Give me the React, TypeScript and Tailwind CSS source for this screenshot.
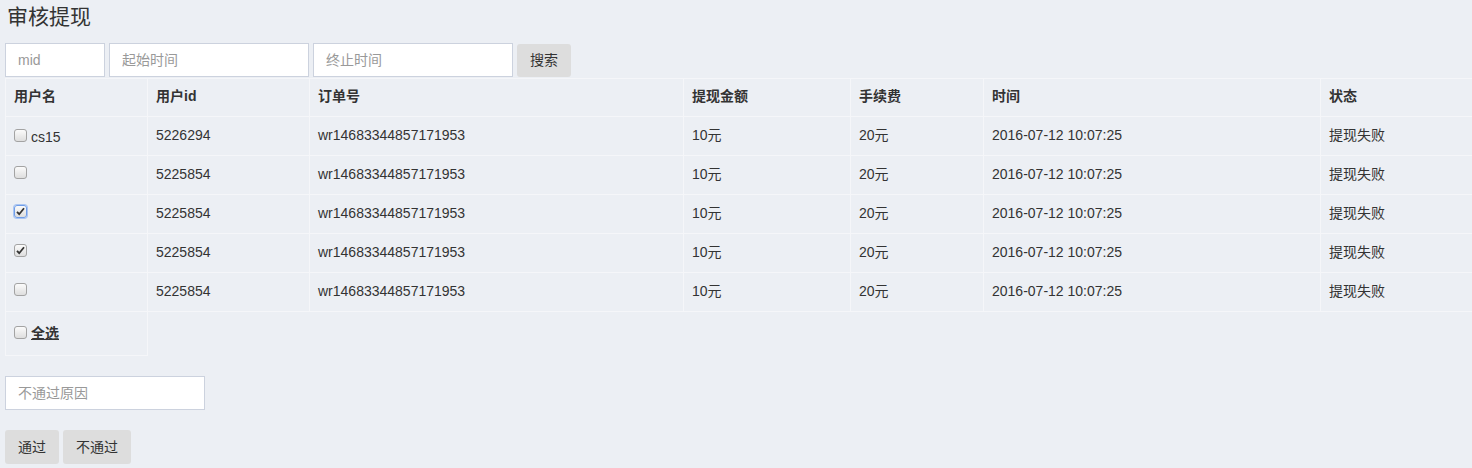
import React from "react";

const font = { fontFamily: '"Liberation Sans", Arial, "Noto Sans CJK SC", sans-serif' };

function Box({ checked, focus }: { checked?: boolean; focus?: boolean }) {
  return (
    <span
      className={
        "relative inline-block w-[13px] h-[13px] rounded-[3px] border align-middle bg-gradient-to-b from-[#fbfbfb] to-[#dedede] " +
        (focus ? "border-[#6f9de8] shadow-[0_0_0_1px_#a9c5f2]" : "border-[#a3a3a3]")
      }
    >
      {checked && (
        <svg viewBox="0 0 13 13" className="absolute left-[-1px] top-[-1px] w-[13px] h-[13px]">
          <path d="M3 6.8 L5.2 9.2 L10 3.2" stroke="#333" strokeWidth="1.8" fill="none" />
        </svg>
      )}
    </span>
  );
}

const rows = [
  { name: "cs15", id: "5226294", checked: false, focus: false },
  { name: "", id: "5225854", checked: false, focus: false },
  { name: "", id: "5225854", checked: true, focus: true },
  { name: "", id: "5225854", checked: true, focus: false },
  { name: "", id: "5225854", checked: false, focus: false },
];

const td = "border border-[#f5f6f9] px-2 pb-[2px] align-middle text-left";

export default function App() {
  return (
    <div className="min-h-[468px] w-[1472px] bg-[#eceff4] text-[#333] text-[14px] overflow-hidden" style={font}>
      <div className="pl-[7px] pt-[2px] h-[43px] text-[21px] leading-[30px] text-[#333]">审核提现</div>
      <div className="flex gap-[4px] pl-[5px] h-[35px]">
        <input className="w-[100px] h-[34px] border border-[#ccd2de] bg-white px-3 text-[14px] placeholder:text-[#999] outline-none" placeholder="mid" style={font} />
        <input className="w-[200px] h-[34px] border border-[#ccd2de] bg-white px-3 text-[14px] placeholder:text-[#999] outline-none" placeholder="起始时间" style={font} />
        <input className="w-[200px] h-[34px] border border-[#ccd2de] bg-white px-3 text-[14px] placeholder:text-[#999] outline-none" placeholder="终止时间" style={font} />
        <button className="w-[54px] h-[33px] mt-[1px] bg-[#dddddd] rounded-[3px] text-[14px] text-[#333]" style={font}>搜索</button>
      </div>
      <table className="ml-[5px] w-[1472px] table-fixed border-collapse">
        <colgroup>
          <col className="w-[142px]" />
          <col className="w-[162px]" />
          <col className="w-[374px]" />
          <col className="w-[167px]" />
          <col className="w-[133px]" />
          <col className="w-[337px]" />
          <col />
        </colgroup>
        <thead>
          <tr className="h-[38px] font-bold">
            <th className={td}>用户名</th>
            <th className={td}>用户id</th>
            <th className={td}>订单号</th>
            <th className={td}>提现金额</th>
            <th className={td}>手续费</th>
            <th className={td}>时间</th>
            <th className={td}>状态</th>
          </tr>
        </thead>
        <tbody>
          {rows.map((r, i) => (
            <tr key={i} className="h-[39px]">
              <td className={td}>
                <span className="inline-flex items-center gap-[4px]">
                  <Box checked={r.checked} focus={r.focus} />
                  {r.name && <span className="pt-[4px]">{r.name}</span>}
                </span>
              </td>
              <td className={td}>{r.id}</td>
              <td className={td}>wr14683344857171953</td>
              <td className={td}>10元</td>
              <td className={td}>20元</td>
              <td className={td}>2016-07-12 10:07:25</td>
              <td className={td}>提现失败</td>
            </tr>
          ))}
          <tr className="h-[44px]">
            <td className={td}>
              <span className="inline-flex items-center gap-[4px]">
                <Box />
                <span className="font-bold underline pt-[2px]">全选</span>
              </span>
            </td>
            <td colSpan={6}></td>
          </tr>
        </tbody>
      </table>
      <div className="pl-[5px] pt-[20px]">
        <input className="w-[200px] h-[34px] border border-[#ccd2de] bg-white px-3 text-[14px] placeholder:text-[#999] outline-none" placeholder="不通过原因" style={font} />
      </div>
      <div className="flex gap-[4px] pl-[5px] pt-[20px]">
        <button className="w-[54px] h-[34px] bg-[#dddddd] rounded-[3px] text-[14px] text-[#333]" style={font}>通过</button>
        <button className="w-[68px] h-[34px] bg-[#dddddd] rounded-[3px] text-[14px] text-[#333]" style={font}>不通过</button>
      </div>
    </div>
  );
}
